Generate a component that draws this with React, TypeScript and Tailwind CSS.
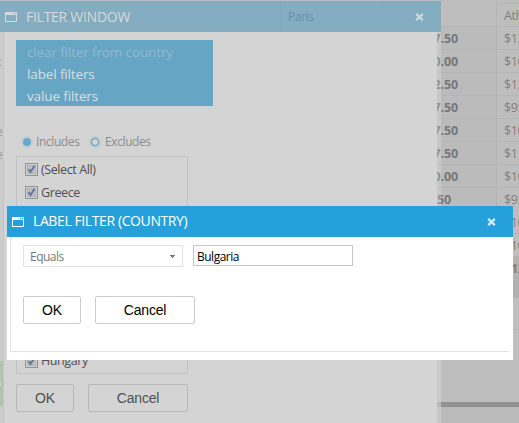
import React from "react";

const rows: [string, string][] = [
  ["7.50", "$13"],
  ["0.00", "$10"],
  ["2.50", "$12"],
  ["7.50", "$95"],
  ["7.50", "$10"],
  ["7.50", "$11"],
  ["0.00", "$10"],
  ["50", "$92"],
  ["", "$10"],
  ["", "$10"],
];

function WindowIcon({ className }: { className: string }) {
  return (
    <svg className={className} width="12" height="10" viewBox="0 0 12 10" shapeRendering="crispEdges" fill="currentColor">
      <path d="M0 0h12v10H0zM1 3v6h10V3zM8 1v1h1V1zM10 1v1h1V1z" fillRule="evenodd" />
    </svg>
  );
}

function CloseIcon({ className }: { className: string }) {
  return (
    <svg className={className} width="9" height="8" viewBox="0 0 9 8">
      <path d="M1.2 .8 7.8 7.2M7.8 .8 1.2 7.2" stroke="currentColor" strokeWidth="2.3" />
    </svg>
  );
}

function CheckItem({ label }: { label: string }) {
  return (
    <div className="flex h-6 items-center pl-2">
      <svg width="13" height="13" viewBox="0 0 13 13" className="shrink-0">
        <rect x=".5" y=".5" width="12" height="12" fill="#d0d0d0" stroke="#929292" />
        <rect x="2.5" y="2.5" width="8" height="8" fill="#bec0c4" stroke="#b0b3b8" />
        <path d="M3.5 6.2 5.5 9 9.6 2.8" fill="none" stroke="#6574a0" strokeWidth="2" />
      </svg>
      <span className="ml-[3px] pt-px text-[12.5px] tracking-[-0.4px] text-[#505050]">{label}</span>
    </div>
  );
}

function Button({ label, className }: { label: string; className: string }) {
  return (
    <button className={`h-7 rounded-[2px] border font-['Liberation_Sans',Arial,sans-serif] text-[14px] leading-[26px] ${className}`}>
      {label}
    </button>
  );
}

function DataGrid() {
  return (
    <div className="flex h-full flex-col pl-[437px] text-[12.5px] tracking-[-0.4px] text-[#808080]">
      <div className="flex h-[27px] shrink-0 border-b border-[#b4b4b4]">
        <div className="w-[60px] shrink-0 border-r border-[#b4b4b4]" />
        <div className="mt-[3px] min-w-0 flex-1 border-t border-[#b4b4b4] pl-[7px] leading-[24px]">Ath</div>
      </div>
      {rows.map(([total, value], i) => (
        <div key={i} className="flex h-[23px] shrink-0 border-b border-[#b4b4b4] leading-[23px]">
          <div className={`flex w-[60px] shrink-0 justify-end overflow-hidden border-r border-[#b4b4b4] bg-[#bbbbbb] font-bold tracking-[-0.1px] text-[#777] ${i === 7 ? "pr-[45px]" : "pr-[38px]"}`}>
            {total}
          </div>
          <div className="min-w-0 flex-1 pl-[7px]">{value}</div>
        </div>
      ))}
      <div className="flex h-[23px] shrink-0 border-b border-[#b4b4b4] bg-[#b3b3b3] font-bold leading-[23px]">
        <span className="pl-[74px]">12</span>
      </div>
      <div className="h-[18px] shrink-0 bg-[#b1b1b1]" />
      <div className="h-8 shrink-0 border-b border-[#b3b3b3]" />
      <div className="h-[72px] shrink-0" />
      <div className="h-[5px] shrink-0 bg-[#919191]" />
      <div className="flex-1 bg-[#bababa]" />
    </div>
  );
}

function FilterWindow() {
  return (
    <section className="absolute top-px left-0 flex h-[422px] w-[441px] flex-col">
      <header className="flex h-[31px] shrink-0 items-center bg-[#85adc1] pl-[5px] text-[#d3dade]">
        <WindowIcon className="mr-[9px]" />
        <h1 className="relative w-[112px] text-[14px] tracking-[-0.27px] whitespace-nowrap">
          <span className="absolute left-[36px] text-[12px] leading-[20px] text-[#769bae]">Sofia</span>
          <span className="relative">FILTER WINDOW</span>
        </h1>
        <div className="ml-[142px] flex h-full w-[103px] items-center border-x border-[#7faabf] pl-[7px] text-[12px] tracking-[-0.4px] text-[#688fa4]">Paris</div>
        <CloseIcon className="ml-8 text-[#c9d8df]" />
      </header>
      <div className="flex flex-1">
        <div className="flex w-1 shrink-0 flex-col overflow-hidden border-r border-[#c4c4c4] bg-[#cccccc] text-[12px] text-[#999]">
          <div className="h-[21px] shrink-0" />
          <span className="-ml-1 h-[70px] shrink-0">c</span>
          <span className="-ml-1 h-[23px] shrink-0">e</span>
          <span className="-ml-1 h-[215px] shrink-0">e</span>
          <span className="-ml-1 h-[45px] shrink-0 bg-[#b2c3b0] pt-3 text-[#d6ded5]">s</span>
        </div>
        <div className="w-[433px] shrink-0 bg-[#d4d4d4] pt-2 pl-3">
          <nav className="flex h-[66px] w-[197px] flex-col bg-[#67a5c4] pt-px pl-[11px] text-[13.5px] leading-[22px] tracking-[-0.13px] text-[#d8dfe3]">
            <span className="text-[#91bace]">clear filter from country</span>
            <span>label filters</span>
            <span>value filters</span>
          </nav>
          <div className="mt-[27px] flex h-[18px] items-center pl-[5px] text-[12px] tracking-[-0.4px] text-[#8c8c8c]">
            <svg width="12" height="12" viewBox="0 0 12 12">
              <circle cx="6" cy="6" r="5.5" fill="#d0d0d0" stroke="#c4c8ca" />
              <circle cx="6" cy="6" r="4" fill="#62a8cc" />
            </svg>
            <span className="ml-[3px] w-[53px]">Includes</span>
            <svg width="12" height="12" viewBox="0 0 12 12">
              <circle cx="6" cy="6" r="5.5" fill="#d0d0d0" stroke="#c4c8ca" />
              <circle cx="6" cy="6" r="3.6" fill="#d6d6d6" stroke="#62a8cc" strokeWidth="1.3" />
            </svg>
            <span className="ml-1">Excludes</span>
          </div>
          <div className="mt-[5px] flex h-[218px] w-[172px] flex-col border border-[#c3c3c3] pt-px">
            <CheckItem label="(Select All)" />
            <CheckItem label="Greece" />
            <div className="mt-[145px]">
              <CheckItem label="Hungary" />
            </div>
          </div>
          <div className="mt-[10px] flex gap-[14px]">
            <Button label="OK" className="w-[58px] border-[#b8b8b8] text-[#505050]" />
            <Button label="Cancel" className="w-[100px] border-[#b8b8b8] tracking-[-0.2px] text-[#505050]" />
          </div>
        </div>
        <div className="flex w-1 shrink-0 flex-col bg-white/20">
          <div className="mt-[370px] h-[5px] bg-[#b9b9b9]" />
        </div>
      </div>
    </section>
  );
}

function LabelFilterDialog() {
  return (
    <section className="absolute top-[206px] left-[7px] h-[154px] w-[506px] bg-white">
      <header className="flex h-[31px] items-center bg-[#26a0da] pl-[5px] text-white">
        <WindowIcon className="mr-[9px]" />
        <h2 className="-mt-px w-[454px] text-[14px] leading-[20px] tracking-[-0.4px]">LABEL FILTER (COUNTRY)</h2>
        <CloseIcon className="text-[#d0edfa]" />
      </header>
      <div className="mr-1 ml-[3px] h-[115px] border-b border-l border-[#e3e3e3] pt-2 pl-3">
        <div className="flex gap-[10px] text-[12px] tracking-[-0.5px]">
          <div className="flex h-[22px] w-[160px] items-center justify-between border border-[#e2e2e2] pr-[7px] pl-[6px] text-[#777]">
            <span className="pt-px">Equals</span>
            <svg width="5" height="3" viewBox="0 0 5 3" fill="#777"><path d="M0 0h5v1H4v1H3v1H2V2H1V1H0z" /></svg>
          </div>
          <div className="flex h-[21px] w-[160px] items-center border border-[#c6c6c6] pt-[2px] pl-[3px] text-black">Bulgaria</div>
        </div>
        <div className="mt-[29px] flex gap-[14px]">
          <Button label="OK" className="w-[58px] border-[#cccccc] text-black" />
          <Button label="Cancel" className="w-[100px] border-[#cccccc] tracking-[-0.2px] text-black" />
        </div>
      </div>
    </section>
  );
}

export default function App() {
  return (
    <main className="relative h-[423px] w-[519px] overflow-hidden bg-[#bebebe] font-['Open_Sans','Noto_Sans',sans-serif]">
      <DataGrid />
      <FilterWindow />
      <LabelFilterDialog />
    </main>
  );
}
